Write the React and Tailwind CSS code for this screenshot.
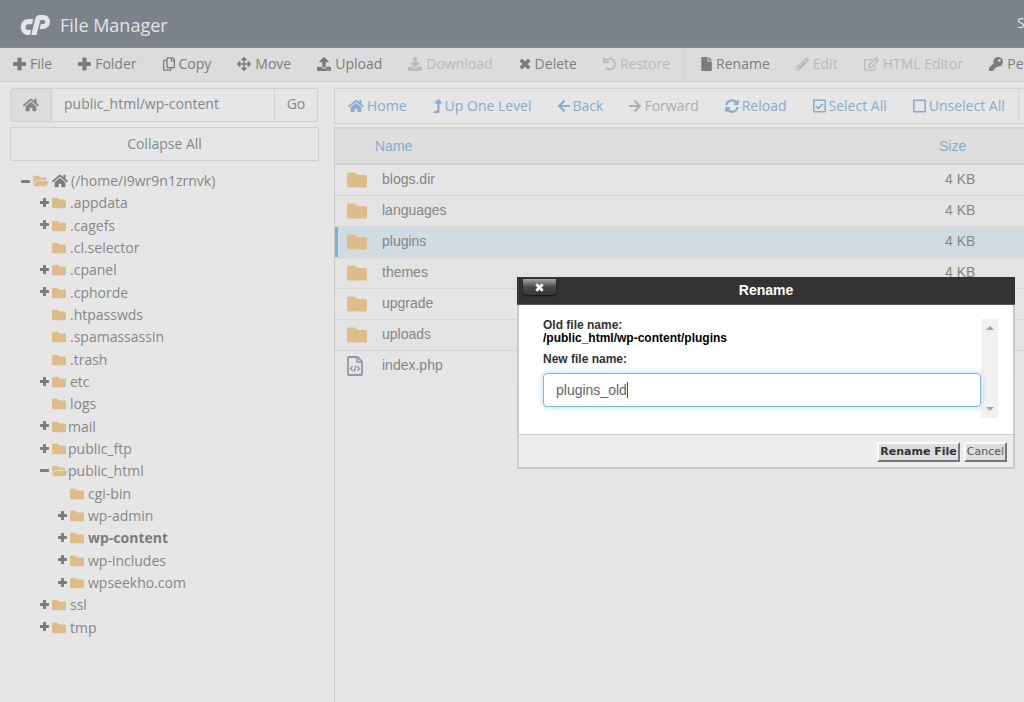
import React, { useState } from "react";
import {
  FaArrowLeft,
  FaArrowRight,
  FaArrowsAlt,
  FaDownload,
  FaFile,
  FaFolder,
  FaFolderOpen,
  FaHome,
  FaKey,
  FaLevelUpAlt,
  FaPencilAlt,
  FaRegCopy,
  FaRegEdit,
  FaSyncAlt,
  FaUndo,
  FaUpload,
} from "react-icons/fa";

const Plus = ({ className }) => (
  <svg viewBox="0 0 13 13" className={className} fill="currentColor">
    <path d="M5.3 0h2.4a.9.9 0 0 1 .9.9v3.5h3.5a.9.9 0 0 1 .9.9v2.4a.9.9 0 0 1-.9.9H8.6v3.5a.9.9 0 0 1-.9.9H5.3a.9.9 0 0 1-.9-.9V8.6H.9a.9.9 0 0 1-.9-.9V5.3a.9.9 0 0 1 .9-.9h3.5V.9a.9.9 0 0 1 .9-.9z" />
  </svg>
);

const Minus = ({ className }) => (
  <svg viewBox="0 0 13 13" className={className} fill="currentColor">
    <rect y="4.4" width="13" height="4.2" rx="0.9" />
  </svg>
);

const Times = ({ className }) => (
  <svg viewBox="0 0 13 13" className={className} stroke="currentColor" strokeWidth="4">
    <path d="M1.9 1.9 11.1 11.1M11.1 1.9 1.9 11.1" />
  </svg>
);

// Square tick boxes for the select actions
const CheckedBox = ({ className }) => (
  <svg viewBox="0 0 13 14" className={className} fill="none" stroke="currentColor">
    <rect x="0.8" y="1.3" width="11.4" height="11.4" rx="0.5" strokeWidth="1.5" />
    <path d="M3.3 7.2 5.5 9.4 9.9 4.8" strokeWidth="1.6" />
  </svg>
);

const EmptyBox = ({ className }) => (
  <svg viewBox="0 0 13 14" className={className} fill="none" stroke="currentColor">
    <rect x="0.8" y="1.3" width="11.4" height="11.4" rx="0.5" strokeWidth="1.5" />
  </svg>
);

const CodeFile = () => (
  <svg viewBox="0 0 16 20" className="w-4 h-5" fill="none" stroke="#9297a4">
    <path d="M2 1h8.5L15 5.5V18a1 1 0 0 1-1 1H2a1 1 0 0 1-1-1V2a1 1 0 0 1 1-1z" strokeWidth="1.8" />
    <path d="M10 1v5h5" strokeWidth="1.4" />
    <path d="M5.6 10.3 3.5 12.5l2.1 2.2M10.4 10.3l2.1 2.2-2.1 2.2M8.9 9.3 7.1 15.7" strokeWidth="1.4" />
  </svg>
);

const Logo = () => (
  <svg viewBox="0 0 30 20" className="w-[30px] h-5" fill="#e4e5e6">
    <path d="M13.4 4H8.2C4 4 .7 7.6.7 12s3.3 8 7 8h2.2l1.3-5H8.3c-1.7 0-2.8-1-2.8-2.7s1.1-3.1 2.7-3.1h3.9z" />
    <path d="M11.2 20 15.2 4C15.9 1.3 17.3 0 19.8 0h3.7C27.4 0 30 3 30 6.8s-2.8 7.1-6.8 7.1h-3.7l1.3-4.9H23c1.4 0 2.2-.9 2.2-2.1S24.4 5 23 5h-1.6c-.8 0-1.1.3-1.3 1L16.5 20z" />
  </svg>
);

const toolbar = [
  { label: "File", icon: Plus, size: "w-[13px]" },
  { label: "Folder", icon: Plus, size: "w-[13px]" },
  { label: "Copy", icon: FaRegCopy, size: "w-3" },
  { label: "Move", icon: FaArrowsAlt, size: "w-[14px]" },
  { label: "Upload", icon: FaUpload, size: "w-[14px]" },
  { label: "Download", icon: FaDownload, size: "w-[14px]", disabled: true },
  { label: "Delete", icon: Times, size: "w-3" },
  { label: "Restore", icon: FaUndo, size: "w-[13px]", disabled: true, last: true },
  { label: "Rename", icon: FaFile, size: "w-[11px]" },
  { label: "Edit", icon: FaPencilAlt, size: "w-[13px]", disabled: true },
  { label: "HTML Editor", icon: FaRegEdit, size: "w-[15px]", disabled: true },
  { label: "Permissions", icon: FaKey, size: "w-[14px]" },
];

const actions = [
  { label: "Home", icon: FaHome, size: "w-4" },
  { label: "Up One Level", icon: FaLevelUpAlt, size: "w-[9px]" },
  { label: "Back", icon: FaArrowLeft, size: "w-3" },
  { label: "Forward", icon: FaArrowRight, size: "w-3", disabled: true },
  { label: "Reload", icon: FaSyncAlt, size: "w-[14px]" },
  { label: "Select All", icon: CheckedBox, size: "w-[13px]" },
  { label: "Unselect All", icon: EmptyBox, size: "w-[13px]", last: true },
];

const tree = [
  { name: ".appdata", level: 1, toggle: "plus" },
  { name: ".cagefs", level: 1, toggle: "plus" },
  { name: ".cl.selector", level: 1 },
  { name: ".cpanel", level: 1, toggle: "plus" },
  { name: ".cphorde", level: 1, toggle: "plus" },
  { name: ".htpasswds", level: 1 },
  { name: ".spamassassin", level: 1 },
  { name: ".trash", level: 1 },
  { name: "etc", level: 1, toggle: "plus" },
  { name: "logs", level: 1 },
  { name: "mail", level: 1, toggle: "plus", tight: true },
  { name: "public_ftp", level: 1, toggle: "plus", tight: true },
  { name: "public_html", level: 1, toggle: "minus" },
  { name: "cgi-bin", level: 2 },
  { name: "wp-admin", level: 2, toggle: "plus" },
  { name: "wp-content", level: 2, toggle: "plus", current: true },
  { name: "wp-includes", level: 2, toggle: "plus" },
  { name: "wpseekho.com", level: 2, toggle: "plus" },
  { name: "ssl", level: 1, toggle: "plus" },
  { name: "tmp", level: 1, toggle: "plus" },
];

const files = [
  { name: "blogs.dir", size: "4 KB" },
  { name: "languages", size: "4 KB" },
  { name: "plugins", size: "4 KB", selected: true },
  { name: "themes", size: "4 KB" },
  { name: "upgrade", size: "4 KB" },
  { name: "uploads", size: "4 KB" },
  { name: "index.php", size: "", code: true },
];

function TreeRow({ item }) {
  const open = item.toggle === "minus";

  return (
    <li className={`flex items-center ${item.level === 2 ? "pl-[58px]" : "pl-10"}`}>
      <span className="w-3 shrink-0 pb-[2px] text-[#7c7c7c]">
        {item.toggle === "plus" && <Plus className="w-[9px] h-[9px]" />}
        {open && <Minus className="w-[9px] h-[9px]" />}
      </span>
      {open ? (
        <FaFolderOpen className="w-4 h-[14px] shrink-0 text-[#dfbd8b]" />
      ) : (
        <FaFolder className="w-[14px] h-[14px] shrink-0 text-[#dfbd8b]" />
      )}
      <a
        href="#"
        className={`${open ? "" : item.tight ? "pl-[2px]" : "pl-1"} ${item.current ? "font-bold text-[#7c7c7c]" : ""}`}
      >
        {item.name}
      </a>
    </li>
  );
}

function RenameDialog() {
  const [newName, setNewName] = useState("plugins_old");

  return (
    <div
      role="dialog"
      aria-label="Rename"
      className="absolute left-[517px] top-[277px] w-[498px] bg-[#cbcbcb] font-['Liberation_Sans',Arial,sans-serif]"
    >
      <div className="relative h-7 pb-[2px] bg-[#333333] border-b border-[#5a5a5a] flex items-center justify-center">
        <h2 className="text-sm font-bold text-white">Rename</h2>
        <button
          type="button"
          aria-label="Close"
          className="absolute left-[6px] top-[2px] w-[33px] h-4 flex items-center justify-center rounded-b-sm bg-linear-to-b from-[#a8a8a8] via-[#4c4849] to-[#3a3637] shadow-[0_1px_2px_#111] text-white"
        >
          <Times className="w-[9px] h-[9px]" />
        </button>
      </div>
      <div className="mx-[2px] mb-[2px] bg-white">
        <div className="flex pt-[14px] pl-6 pr-[15px] pb-4">
          <div className="flex-1 text-xs leading-[13px] font-bold">
            <p className="text-[#333333]">Old file name:</p>
            <p className="text-black">/public_html/wp-content/plugins</p>
            <label htmlFor="new-name" className="block mt-2 mb-[7px] text-[#333333]">
              New file name:
            </label>
            <div className="relative">
              <input
                id="new-name"
                type="text"
                value={newName}
                onChange={(e) => setNewName(e.target.value)}
                className="block w-full h-[34px] px-3 rounded-[4px] border border-[#7cb9e8] bg-white text-sm font-normal text-[#666666] outline-none shadow-[0_0_6px_#b5d8f3]"
              />
              <span className="absolute left-[84px] top-[9px] w-px h-4 bg-[#555555]" />
            </div>
          </div>
          <div className="w-[17px] h-[99px] flex flex-col justify-between items-center py-[7px] bg-[#f1f1f1]">
            <span className="border-x-4 border-x-transparent border-b-4 border-b-[#a3a3a3]" />
            <span className="border-x-4 border-x-transparent border-t-4 border-t-[#a3a3a3]" />
          </div>
        </div>
        <div className="flex justify-end gap-1 h-[33px] pt-[7px] pr-[6px] bg-[#ededed] border-t border-[#cfcfcf] font-['DejaVu_Sans',Verdana,sans-serif] text-[11px]">
          <button
            type="button"
            className="h-5 px-px bg-[#dddddd] border-2 border-t-[#fafafa] border-l-[#fafafa] border-r-[#777777] border-b-[#777777] flex items-center font-bold text-[#333333]"
          >
            Rename File
          </button>
          <button
            type="button"
            className="h-5 px-px bg-[#dddddd] border-2 border-t-[#fafafa] border-l-[#fafafa] border-r-[#777777] border-b-[#777777] flex items-center text-[#555555]"
          >
            Cancel
          </button>
        </div>
      </div>
    </div>
  );
}

export default function App() {
  const [path, setPath] = useState("public_html/wp-content");

  return (
    <div className="relative min-h-screen flex flex-col overflow-hidden bg-[#e6e6e6] font-['Open_Sans',sans-serif] text-sm text-[#868686]">
      <header className="h-12 flex items-center pt-[2px] pl-5 bg-[#7b828c] border-b border-[#858a97]">
        <Logo />
        <h1 className="pl-[10px] text-lg text-[#e4e5e6]">File Manager</h1>
        <div className="ml-auto pb-1 w-[7px] overflow-hidden text-sm text-[#e4e5e6]">Search</div>
      </header>

      <nav className="h-[34px] flex bg-[#dcdcdc] border-b border-[#cecece] whitespace-nowrap overflow-hidden">
        {toolbar.map(({ label, icon: Icon, size, disabled, last }) => (
          <button
            key={label}
            type="button"
            disabled={disabled}
            className={`flex shrink-0 items-center gap-1 px-[13px] pb-px ${
              disabled ? "text-[#bababa]" : "text-[#7c7c7c]"
            } ${last ? "mr-1 border-r border-dotted border-[#cecece]" : ""}`}
          >
            <Icon className={`${size} h-[14px]`} />
            {label}
          </button>
        ))}
      </nav>

      <div className="flex-1 flex">
        <aside className="w-[334px] shrink-0 pt-[6px]">
          <div className="flex h-[34px] ml-[10px] mr-4">
            <button
              type="button"
              aria-label="Home directory"
              className="w-[42px] flex items-center justify-center rounded-l-sm border border-[#cecece] bg-[#dcdcdc] text-[#868686]"
            >
              <FaHome className="text-base" />
            </button>
            <input
              type="text"
              aria-label="Path"
              value={path}
              onChange={(e) => setPath(e.target.value)}
              className="flex-1 min-w-0 px-3 pb-[2px] border-y border-[#d0d0d0] bg-[#e6e6e6] outline-none"
            />
            <button type="button" className="w-11 pb-[2px] border border-[#d0d0d0]">
              Go
            </button>
          </div>
          <div className="mt-[5px] ml-[10px] mr-[15px]">
            <button type="button" className="w-full h-[34px] border border-[#d0d0d0] rounded-xs">
              Collapse All
            </button>
          </div>
          <ul className="mt-[9px] grid auto-rows-fr h-[469px] whitespace-nowrap">
            <li className="flex items-center pl-[21px]">
              <Minus className="mr-[3px] w-[9px] h-[9px] text-[#7c7c7c]" />
              <FaFolderOpen className="w-4 h-[14px] text-[#dfbd8b]" />
              <FaHome className="ml-[3px] text-base text-[#7c7c7c]" />
              <a href="#" className="pl-[3px]">
                (/home/i9wr9n1zrnvk)
              </a>
            </li>
            {tree.map((item) => (
              <TreeRow key={item.name} item={item} />
            ))}
          </ul>
        </aside>

        <main className="flex-1 min-w-0 pt-[6px] flex flex-col overflow-hidden">
          <nav className="h-9 flex border-y border-l border-[#d2d2d2] whitespace-nowrap overflow-hidden">
            {actions.map(({ label, icon: Icon, size, disabled, last }) => (
              <button
                key={label}
                type="button"
                disabled={disabled}
                className={`flex shrink-0 items-center gap-[3px] px-[13px] pb-px ${
                  disabled ? "text-[#adadad]" : "text-[#88abcd]"
                } ${last ? "border-r border-dotted border-[#cecece]" : ""}`}
              >
                <Icon className={`${size} h-[14px]`} />
                {label}
              </button>
            ))}
          </nav>

          <div className="mt-[3px] flex-1 border-l border-[#cccccc]">
            <table className="w-full table-fixed border-collapse font-['Liberation_Sans',Arial,sans-serif]">
              <thead>
                <tr className="h-9 bg-[#dedede] border-y-2 border-[#d3d3d3] text-[#88abcd]">
                  <th className="w-10" />
                  <th className="text-left font-normal">Name</th>
                  <th className="w-[85px] text-left font-normal">Size</th>
                </tr>
              </thead>
              <tbody>
                {files.map((file, i) => (
                  <tr
                    key={file.name}
                    className={`h-[31px] ${i < 6 ? "border-b border-[#d5d5d5]" : ""} ${
                      file.selected ? "bg-[#d1dce2]" : i % 2 ? "bg-[#e3e3e3]" : "bg-[#e5e5e5]"
                    }`}
                  >
                    <td className={`pl-3 ${file.selected ? "shadow-[inset_3px_0_0_#75b4d2]" : ""}`}>
                      {file.code ? <CodeFile /> : <FaFolder className="text-xl text-[#dfbd8b]" />}
                    </td>
                    <td className="pl-[7px] pb-px">{file.name}</td>
                    <td className="pl-[6px] pb-px">{file.size}</td>
                  </tr>
                ))}
              </tbody>
            </table>
          </div>
        </main>
      </div>

      <RenameDialog />
    </div>
  );
}
